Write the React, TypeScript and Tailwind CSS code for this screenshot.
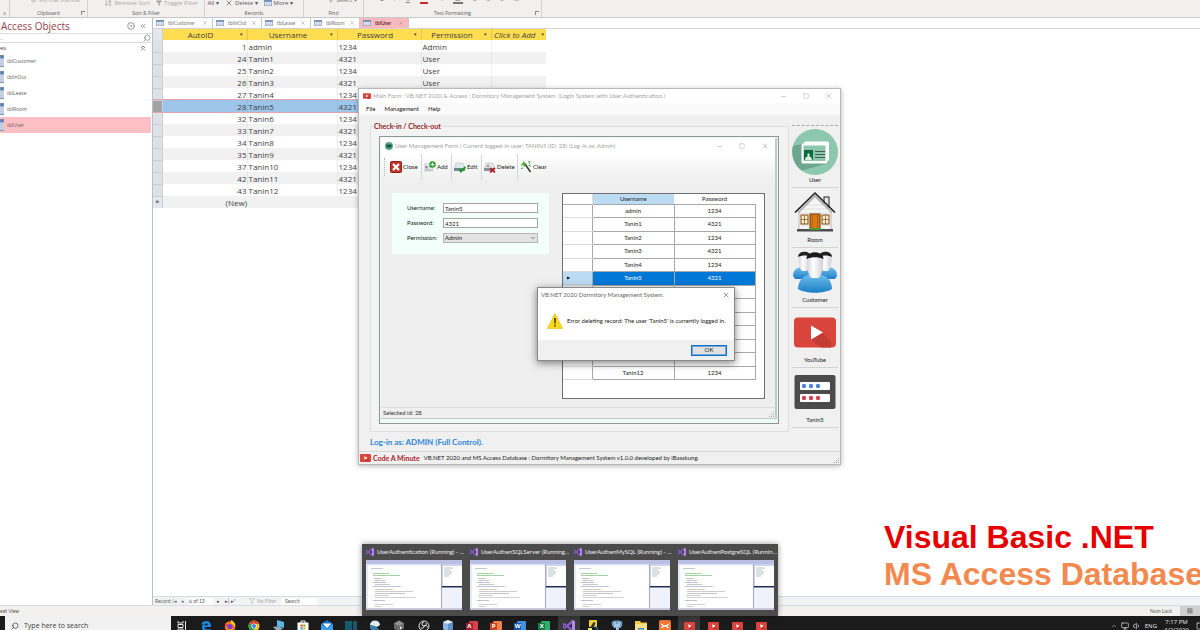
import { useState } from 'react'
import type { ReactNode } from 'react'
import {
  ArrowDownAZ,
  ChevronDown,
  ChevronsLeft,
  ChevronsUp,
  CircleDot,
  Filter,
  LayoutGrid,
  Minus,
  MousePointer2,
  Monitor,
  Paintbrush,
  Search,
  Square,
  Volume1,
  X,
} from 'lucide-react'

interface Account {
  id: number
  username: string
  password: string
  permission: string
}

const ACCOUNTS: Account[] = [
  { id: 1, username: 'admin', password: '1234', permission: 'Admin' },
  { id: 24, username: 'Tanin1', password: '4321', permission: 'User' },
  { id: 25, username: 'Tanin2', password: '1234', permission: 'User' },
  { id: 26, username: 'Tanin3', password: '4321', permission: 'User' },
  { id: 27, username: 'Tanin4', password: '1234', permission: 'User' },
  { id: 28, username: 'Tanin5', password: '4321', permission: 'Admin' },
  { id: 32, username: 'Tanin6', password: '1234', permission: 'User' },
  { id: 33, username: 'Tanin7', password: '4321', permission: 'User' },
  { id: 34, username: 'Tanin8', password: '1234', permission: 'User' },
  { id: 35, username: 'Tanin9', password: '4321', permission: 'User' },
  { id: 37, username: 'Tanin10', password: '1234', permission: 'User' },
  { id: 42, username: 'Tanin11', password: '4321', permission: 'User' },
  { id: 43, username: 'Tanin12', password: '1234', permission: 'User' },
]

const SELECTED_ID = 28

const TABLES = ['tblCustomer', 'tblInOut', 'tblLease', 'tblRoom', 'tblUser']

const PREVIEWS = [
  'UserAuthentication (Running) - ...',
  'UserAuthenSQLServer (Running...',
  'UserAuthenMySQL (Running) - ...',
  'UserAuthenPostgreSQL (Runnin...',
]

/* ---------- icons ---------- */

function TableIcon({ className }: { className: string }) {
  return (
    <svg viewBox="0 0 12 10" className={className} preserveAspectRatio="none">
      <rect x="0.5" y="0.5" width="11" height="9" fill="#fff" stroke="#7f93b5" />
      <rect x="0.5" y="0.5" width="11" height="2.5" fill="#5f7fb0" />
      <path d="M1 5h10M1 7.3h10M4.3 3v6M8 3v6" stroke="#9fb3d0" strokeWidth="0.8" />
    </svg>
  )
}

function YouTubeIcon({ className }: { className: string }) {
  return (
    <svg viewBox="0 0 42 30" className={className}>
      <rect width="42" height="30" rx="4" fill="#d9453c" />
      <path d="M28 15l9 9v6H27L17 22z" fill="#c23c34" />
      <path d="M17 8l12 7-12 7z" fill="#fff" />
    </svg>
  )
}

function VisualStudioIcon({ className }: { className: string }) {
  return (
    <svg viewBox="0 0 12 12" className={className}>
      <path d="M9 0l3 1.2v9.6L9 12 4 7.2 1.5 9 0 8.3V3.7L1.5 3 4 4.8z" fill="#8a5fc7" />
      <path d="M9 3.3v5.4L5.5 6zM1.2 4.6v2.8L2.7 6z" fill="#3b2b57" />
      <path d="M9 0l3 1.2v9.6L9 12z" fill="#b48be8" />
    </svg>
  )
}

function UserCardIcon() {
  return (
    <svg viewBox="0 0 46 46" className="size-[46px]">
      <circle cx="23" cy="23" r="23" fill="#8cc7ae" />
      <path d="M10 15L1 17a23 23 0 0 0 9 24.5L37 34z" fill="#6ea58f" />
      <rect x="12" y="12.5" width="25" height="19" rx="1.5" fill="#fff" />
      <rect x="9.5" y="14.5" width="26" height="20" rx="1.5" fill="#fff" />
      <path d="M11.5 16.5h22v15.5h-22z" fill="#8cc7ae" />
      <rect x="12" y="21" width="9" height="10" fill="#0d6b3d" />
      <path d="M13 31c0-3 2-3 2.7-3.7-1.6-4 3.2-4 1.7 0C18 28 20 28 20 31z" fill="#d8f0e3" />
      <path d="M23 22.5h10M23 25.5h10M23 28.5h10" stroke="#3f5f55" strokeWidth="1" />
    </svg>
  )
}

function HouseIcon() {
  return (
    <svg viewBox="0 0 42 42" className="size-[42px]">
      <rect x="30" y="6" width="5" height="10" fill="#e9e9e9" stroke="#222" />
      <path d="M5 20L21 4l16 16v19H5z" fill="#f6f6f6" stroke="#9a9a9a" strokeWidth="0.6" />
      <path d="M12 14h18M9 18h24M6 22h30M6 26h30M6 30h30M6 34h30" stroke="#d9d9d9" strokeWidth="0.8" />
      <path d="M1 21.5L21 2l20 19.5" fill="none" stroke="#1d1d1d" strokeWidth="1.6" />
      <path d="M4 21.5L21 5l17 16.5" fill="none" stroke="#b5b5b5" strokeWidth="2" />
      <rect x="7" y="24" width="7" height="9" fill="#f4f0cf" stroke="#8a4a14" />
      <rect x="28" y="24" width="7" height="9" fill="#f4f0cf" stroke="#8a4a14" />
      <path d="M7 28.5h7M28 28.5h7M10.5 24v9M31.5 24v9" stroke="#8a4a14" strokeWidth="0.7" />
      <rect x="16" y="23" width="10" height="15" fill="#d97a12" stroke="#6b3607" />
      <path d="M18.5 24v13M23.5 24v13" stroke="#a9560a" strokeWidth="0.7" />
      <rect x="3" y="38" width="36" height="2.5" fill="#4e4e4e" />
      <rect x="15" y="37" width="12" height="2" fill="#4c9a35" />
    </svg>
  )
}

function PeopleIcon() {
  return (
    <svg viewBox="0 0 44 42" className="h-[42px] w-[44px]">
      <defs>
        <linearGradient id="shirt" x1="0" y1="0" x2="0" y2="1">
          <stop offset="0" stopColor="#6fc0ef" />
          <stop offset="1" stopColor="#1d7fc6" />
        </linearGradient>
        <linearGradient id="face" x1="0" y1="0" x2="1" y2="0">
          <stop offset="0" stopColor="#d5d5d9" />
          <stop offset="0.4" stopColor="#fff" />
          <stop offset="1" stopColor="#cfcfd4" />
        </linearGradient>
      </defs>
      <path d="M0 25c0-6 4-9 10-9s10 3 10 9l-4 3H2z" fill="url(#shirt)" />
      <path d="M44 25c0-6-4-9-10-9s-10 3-10 9l4 3h14z" fill="url(#shirt)" />
      <path d="M5.500 5c0 8 1 13 3.500 15h5c2-2 3-7 3-15z" fill="url(#face)" />
      <path d="M27 5c0 8 1 13 3 15h5c2.500-2 3.500-7 3.500-15z" fill="url(#face)" />
      <path d="M5 6c0-7 13-7 13 0-4-2-9-2-13 0zM26 6c0-7 13-7 13 0-4-2-9-2-13 0z" fill="#222" />
      <path d="M5 38c0-10 7-15 17-15s17 5 17 15c-8 5-26 5-34 0z" fill="url(#shirt)" />
      <path d="M14 7c0 11 1 17 4.500 20h7c3.500-3 4.500-9 4.500-20z" fill="url(#face)" />
      <path d="M13.5 8c0-9 17-9 17 0-5-2.5-12-2.5-17 0z" fill="#1b1b1b" />
    </svg>
  )
}

function LoginIcon() {
  return (
    <svg viewBox="0 0 42 36" className="h-[36px] w-[42px]">
      <rect x="0.5" y="1" width="41" height="34" rx="2" fill="#4b4b4b" />
      <rect x="6" y="8" width="30" height="8" rx="1" fill="#fff" />
      <rect x="6" y="20" width="30" height="8" rx="1" fill="#fff" />
      <circle cx="10" cy="12" r="2.2" fill="#4a86d8" />
      <circle cx="17" cy="12" r="2.2" fill="#4a86d8" />
      <circle cx="24" cy="12" r="2.2" fill="#4a86d8" />
      <circle cx="10" cy="24" r="2.2" fill="#d83f4a" />
      <circle cx="17" cy="24" r="2.2" fill="#d83f4a" />
      <circle cx="24" cy="24" r="2.2" fill="#d83f4a" />
    </svg>
  )
}

const TOOL_ICON = 'size-3 shrink-0'

const TOOLS: { label: string; width: string; icon: ReactNode }[] = [
  {
    label: 'Close',
    width: 'w-[34px]',
    icon: (
      <svg viewBox="0 0 12 12" className={TOOL_ICON}>
        <rect x="0.5" y="0.5" width="11" height="11" rx="1" fill="#c43325" stroke="#8e1f15" />
        <path d="M3 3l6 6M9 3l-6 6" stroke="#fff" strokeWidth="2.2" />
      </svg>
    ),
  },
  {
    label: 'Add',
    width: 'w-[30px]',
    icon: (
      <svg viewBox="0 0 12 12" className={TOOL_ICON}>
        <rect x="0" y="3" width="9" height="7" fill="#e4e9ee" stroke="#b4bcc4" strokeWidth="0.5" />
        <path d="M1.5 5h2v2.5h-2z" fill="#9a6f86" />
        <path d="M5 6h3M1.5 9h6" stroke="#8d97a2" strokeWidth="0.7" />
        <circle cx="8.5" cy="3.5" r="3.2" fill="#27a329" />
        <path d="M8.5 1.7v3.6M6.7 3.5h3.6" stroke="#fff" strokeWidth="1.2" />
      </svg>
    ),
  },
  {
    label: 'Edit',
    width: 'w-[30px]',
    icon: (
      <svg viewBox="0 0 12 12" className={TOOL_ICON}>
        <path d="M2 2h7l2 6H0z" fill="#dfe7ee" stroke="#aab6c2" strokeWidth="0.5" />
        <rect x="0" y="7" width="11" height="3" fill="#6f8796" />
        <path d="M5 8l2 2.5L11.5 6" fill="none" stroke="#24962a" strokeWidth="2" />
      </svg>
    ),
  },
  {
    label: 'Delete',
    width: 'w-[36px]',
    icon: (
      <svg viewBox="0 0 12 12" className={TOOL_ICON}>
        <path d="M2 2h7l2 6H0z" fill="#dfe7ee" stroke="#aab6c2" strokeWidth="0.5" />
        <rect x="0" y="7" width="10" height="3" fill="#8594a0" />
        <circle cx="4" cy="5" r="1.3" fill="#c78a80" />
        <path d="M6 7l5 4.5M11 7l-5 4.5" stroke="#b3201a" strokeWidth="1.7" />
      </svg>
    ),
  },
  {
    label: 'Clear',
    width: 'w-[34px]',
    icon: (
      <svg viewBox="0 0 12 12" className={TOOL_ICON}>
        <path d="M5 3l5.5 8" stroke="#333" strokeWidth="1.5" />
        <path d="M4 0l1 2.3L7.5 3 5 4 4.5 6.5 3 4.2.5 4.5 2.3 2.5z" fill="#4eae3a" />
        <path d="M8 1l2.5-.5M8.5 4.5l2.5.5M1 7.5l2-.5M9 2.5h1" stroke="#3f9c35" />
      </svg>
    ),
  },
]

const SHORTCUTS: { label: string; icon: ReactNode }[] = [
  { label: 'User', icon: <UserCardIcon /> },
  { label: 'Room', icon: <HouseIcon /> },
  { label: 'Customer', icon: <PeopleIcon /> },
  { label: 'YouTube', icon: <YouTubeIcon className="h-[31px] w-[42px]" /> },
  { label: 'Tanin5', icon: <LoginIcon /> },
]

/* Letter tile used by the Office apps on the task bar */
function OfficeIcon({ letter, back, front }: { letter: string; back: string; front: string }) {
  return (
    <span className="relative flex h-[11px] w-3 items-center">
      <span className={`absolute inset-y-0 right-0 w-[9px] rounded-[1px] ${back}`} />
      <span
        className={`relative flex size-[7px] items-center justify-center text-[6px] leading-none font-bold text-white ${front}`}
      >
        {letter}
      </span>
    </span>
  )
}

const APP_ICON = 'size-3'

const APPS: { name: string; active?: boolean; icon: ReactNode }[] = [
  {
    name: 'Task View',
    icon: (
      <svg viewBox="0 0 12 12" className={APP_ICON}>
        <path d="M2 1v2h5V1M2 11V9h5v2M2 4.5h5v3H2zM9.5 1v10" fill="none" stroke="#e8e8e8" />
      </svg>
    ),
  },
  {
    name: 'Edge',
    icon: (
      <svg viewBox="0 0 12 12" className={APP_ICON}>
        <path
          d="M1 5.5C1.5 2.5 3.5 1 6 1c3 0 5 2 5 4.5V7H4.5c.2 2.5 3.5 3 5.8 1.7v2C6.5 12.5 2 11 2 7.5 2 5.5 3 4.2 4.5 3.7 2.8 3.7 1.7 4.5 1 5.5zM4.6 5.3h3.3C7.8 3 4.9 3 4.6 5.3z"
          fill="#1c86e0"
        />
      </svg>
    ),
  },
  {
    name: 'Firefox',
    icon: (
      <svg viewBox="0 0 12 12" className={APP_ICON}>
        <circle cx="6" cy="6.5" r="5.3" fill="#ff7b1c" />
        <path d="M7 0c3 1.5 5 4 4.3 7C10 4 8 4 7 4z" fill="#ffca2c" />
        <circle cx="6" cy="6.5" r="2.6" fill="#7a3fd0" />
        <path d="M1 3c1 1 2 1 3.5 1L3 6l-2 1z" fill="#ff3f5d" />
      </svg>
    ),
  },
  {
    name: 'Chrome',
    icon: (
      <svg viewBox="0 0 12 12" className={APP_ICON}>
        <circle cx="6" cy="6" r="5.5" fill="#f5c518" />
        <path d="M6 6L1.2 3.3A5.5 5.5 0 0 1 11 4H6z" fill="#df4232" />
        <path d="M1.2 3.3A5.5 5.5 0 0 0 5.5 11.5L8 7z" fill="#2f9e4c" />
        <circle cx="6" cy="6" r="2.6" fill="#fff" />
        <circle cx="6" cy="6" r="2" fill="#3f7fe8" />
      </svg>
    ),
  },
  {
    name: 'Remote Desktop',
    icon: (
      <svg viewBox="0 0 12 12" className={APP_ICON}>
        <path d="M4 0l7 2v6L4 6z" fill="#5ab4e6" />
        <path d="M0 7l6-1 4 3-6 2z" fill="#8fa9ba" />
      </svg>
    ),
  },
  {
    name: 'Store',
    icon: (
      <svg viewBox="0 0 12 12" className={APP_ICON}>
        <path d="M4 3V1h4v2" fill="none" stroke="#fff" />
        <rect x="0.5" y="2.5" width="11" height="9.5" fill="#fff" />
        <path d="M3.5 4.5h2.2v2.2H3.5z" fill="#e8502a" />
        <path d="M6.3 4.5h2.2v2.2H6.3z" fill="#7cb82f" />
        <path d="M3.5 7.3h2.2v2.2H3.5z" fill="#2f9fe0" />
        <path d="M6.3 7.3h2.2v2.2H6.3z" fill="#f6b81c" />
      </svg>
    ),
  },
  {
    name: 'Mail',
    icon: (
      <svg viewBox="0 0 12 12" className={APP_ICON}>
        <path d="M0 4l6-4 6 4v7H0z" fill="#1273c4" />
        <path d="M1.5 3.5h9L6 8z" fill="#fff" />
        <path d="M0 4l6 4.5L12 4v7H0z" fill="#3aa0ea" />
      </svg>
    ),
  },
  {
    name: 'Server Explorer',
    icon: (
      <svg viewBox="0 0 12 12" className={APP_ICON}>
        <path d="M0 1h7v11H0zM8 1h4v11H8z" fill="#15596b" />
      </svg>
    ),
  },
  {
    name: 'SQL Compare',
    icon: (
      <svg viewBox="0 0 12 12" className={APP_ICON}>
        <path d="M1 5a5 4.5 0 0 1 10 0L8 7z" fill="#dfe9f1" />
        <path d="M1 5l4 1 5 3a5 5 0 0 1-9-4z" fill="#3f7fae" />
      </svg>
    ),
  },
  {
    name: 'Unity',
    icon: (
      <svg viewBox="0 0 12 12" className={APP_ICON}>
        <path d="M6 .5l5 3v5l-5 3-5-3v-5z" fill="#6a6a6a" />
        <path d="M6 .5l5 3L6 6 1 3.5z" fill="#8f8f8f" />
        <path d="M7 6.5l2 1-2 2z" fill="#fff" />
      </svg>
    ),
  },
  {
    name: 'OBS',
    icon: (
      <svg viewBox="0 0 12 12" className={APP_ICON}>
        <circle cx="6" cy="6" r="5" fill="#222" stroke="#ddd" />
        <path d="M6 2a2 2 0 0 0 0 4 2 2 0 0 1-3 2M6 6a2 2 0 0 1 3.5 1.5M6 6a2 2 0 0 0 2-3" fill="none" stroke="#ddd" />
      </svg>
    ),
  },
  {
    name: 'VirtualBox',
    icon: (
      <svg viewBox="0 0 12 12" className={APP_ICON}>
        <path d="M6 0l5 2v7l-5 3-5-3V2z" fill="#8fb7e4" />
        <path d="M6 0l5 2-5 2-5-2z" fill="#e4effa" />
        <path d="M6 4l5-2v7l-5 3z" fill="#5f8dc6" />
      </svg>
    ),
  },
  { name: 'Access', icon: <OfficeIcon letter="A" back="bg-[#d6434f]" front="bg-[#a4202f]" /> },
  { name: 'PowerPoint', icon: <OfficeIcon letter="P" back="bg-[#f0814f]" front="bg-[#c8431f]" /> },
  { name: 'Word', icon: <OfficeIcon letter="W" back="bg-[#3c93e0]" front="bg-[#1b56ae]" /> },
  { name: 'Excel', icon: <OfficeIcon letter="X" back="bg-[#2fae70]" front="bg-[#147a42]" /> },
  { name: 'Visual Studio', active: true, icon: <VisualStudioIcon className={APP_ICON} /> },
  {
    name: 'SQL Tools',
    icon: (
      <svg viewBox="0 0 12 12" className={APP_ICON}>
        <rect x="2" y="0" width="8" height="7" rx="1" fill="#f3d23b" />
        <path d="M3.5 7l3-5 2 1-2 5z" fill="#333" />
        <path d="M8 7c3-1 3 4 0 4" fill="none" stroke="#3f8fd8" />
        <rect x="1" y="8" width="4" height="4" fill="#f3e27b" />
      </svg>
    ),
  },
  {
    name: 'pgAdmin',
    icon: (
      <svg viewBox="0 0 12 12" className={APP_ICON}>
        <path d="M1 1.5C3 0 9 0 11 1.5c1 2 0 5-1.5 6.5H8v4H5V8C2 9 0 4 1 1.5z" fill="#6f9dc8" />
        <path d="M4 2v5M8 2v5M6 4v6" stroke="#fff" strokeWidth="0.8" />
      </svg>
    ),
  },
  {
    name: 'File Explorer',
    icon: (
      <svg viewBox="0 0 12 12" className={APP_ICON}>
        <path d="M0 1h5l1 1.5h6V11H0z" fill="#f3c84b" />
        <path d="M0 4h12v7H0z" fill="#fbe08a" />
        <path d="M3 12V8h6v4H8V9.5H4V12z" fill="#3f8fd8" />
      </svg>
    ),
  },
  {
    name: 'XAMPP',
    icon: (
      <svg viewBox="0 0 12 12" className={APP_ICON}>
        <rect width="12" height="12" rx="2" fill="#f0793a" />
        <path d="M2.5 4l2 2-2 2M4.5 6h3M9.5 4l-2 2 2 2" fill="none" stroke="#fff" strokeWidth="1.3" />
      </svg>
    ),
  },
  { name: 'YouTube', active: true, icon: <YouTubeIcon className="h-2 w-[11px]" /> },
  { name: 'YouTube 2', icon: <YouTubeIcon className="h-2 w-[11px]" /> },
  { name: 'YouTube 3', icon: <YouTubeIcon className="h-2 w-[11px]" /> },
  { name: 'YouTube 4', icon: <YouTubeIcon className="h-2 w-[11px]" /> },
]

/* ---------- Access shell ---------- */

function RibbonGroup({ label, width, launcher, children }: { label: string; width: string; launcher?: boolean; children?: ReactNode }) {
  return (
    <div className={`relative flex h-full shrink-0 flex-col justify-end border-r border-[#d5d3d2] ${width}`}>
      <div className="flex items-center justify-end gap-1.5 pr-1.5 pb-[3px] text-[6px] leading-[8px] whitespace-nowrap text-[#aaa8a7]">
        {children}
      </div>
      <div className="text-center text-[5px] leading-[7px] text-[#555]">{label}</div>
      {launcher && <span className="absolute right-0.5 bottom-0.5 size-1 border-t border-l border-[#888]" />}
    </div>
  )
}

function Ribbon() {
  return (
    <header className="flex h-[18px] shrink-0 overflow-hidden border-b border-[#c9c7c6] bg-[#f2f0ef] font-['Open_Sans','Noto_Sans',sans-serif]">
      <RibbonGroup label="s" width="w-[10px]" />
      <RibbonGroup label="Clipboard" width="w-[78px]" launcher>
        <span className="flex items-center gap-0.5 pb-[3px]">
          <Paintbrush className="size-1.5" />
          Format Painter
        </span>
      </RibbonGroup>
      <RibbonGroup label="Sort & Filter" width="w-[117px]">
        <span className="flex items-center gap-0.5">
          <ArrowDownAZ className="size-2" />
          Remove Sort
        </span>
        <span className="flex items-center gap-0.5">
          <Filter className="size-1.5 fill-current" />
          Toggle Filter
        </span>
      </RibbonGroup>
      <RibbonGroup label="Records" width="w-[99px]">
        <span className="text-[#555]">All ▾</span>
        <span className="flex items-center gap-0.5 text-[#555]">
          <X className="size-2" />
          Delete ▾
        </span>
        <span className="flex items-center gap-0.5 pr-1 text-[#555]">
          <TableIcon className="h-1.5 w-2" />
          More ▾
        </span>
      </RibbonGroup>
      <RibbonGroup label="Find" width="w-[60px]">
        <span className="flex items-center gap-0.5 pb-[3px] text-[#777]">
          <MousePointer2 className="size-1.5" />
          Select ▾
        </span>
      </RibbonGroup>
      <RibbonGroup label="Text Formatting" width="w-[178px]" launcher>
        <span className="flex w-full items-center justify-between px-4 pb-[3px] text-[#888]">
          <b>B</b>
          <i>I</i>
          <u>U</u>
          <b className="border-b-2 border-[#d0262c] px-0.5">A</b>
          <span>✎</span>
          <b className="border-b-2 border-[#777] px-0.5">◧</b>
          <span>≡</span>
          <span>≡</span>
          <span>≡</span>
          <span>⊞</span>
        </span>
      </RibbonGroup>
    </header>
  )
}

function ObjectsPane() {
  return (
    <aside className="flex w-[151px] shrink-0 flex-col font-['Open_Sans','Noto_Sans',sans-serif]">
      <div className="flex h-[15px] items-center gap-1 pr-1 pl-px text-[#6b6b6b]">
        <h2 className="flex-1 text-[10px] leading-[14px] text-[#9b3c48]">Access Objects</h2>
        <CircleDot className="size-2" />
        <ChevronsLeft className="size-2" />
      </div>
      <label className="flex h-[10px] items-center border-y border-[#dcdcdc]">
        <span className="sr-only">Filter objects</span>
        <input className="h-2 w-0 flex-1 text-[6px] leading-[8px] text-[#777]" defaultValue=".." />
        <Search className="size-2 -scale-x-100 text-[#777]" />
      </label>
      <div className="flex h-[10px] items-center justify-between pr-1 text-[6px] leading-[7px] text-[#444]">
        es
        <ChevronsUp className="size-2" />
      </div>
      <ul>
        {TABLES.map((name) => (
          <li key={name}>
            <button
              className={`flex h-4 w-full items-center gap-[3px] text-[5px] leading-[8px] text-[#5a5a5a] ${name === 'tblUser' ? 'bg-[#fdbfc3]' : ''}`}
            >
              <TableIcon className="h-3 w-1" />
              {name}
            </button>
          </li>
        ))}
      </ul>
    </aside>
  )
}

function DocumentTabs() {
  return (
    <nav className="flex h-[11px] shrink-0 border-b border-[#d2d2d2]">
      {TABLES.map((name, i) => (
        <button
          key={name}
          className={`flex items-center gap-1 border-r border-[#c8c8c8] pr-1 pl-[3px] text-[5px] leading-[8px] ${i === 0 ? 'w-[60px]' : 'w-[49px]'} ${
            name === 'tblUser' ? 'bg-[#f9b9be] font-bold text-[#6b3239]' : 'text-[#7a7a7a]'
          }`}
        >
          <TableIcon className="h-1.5 w-2 shrink-0" />
          <span className="flex-1 text-left">{name}</span>
          <X className="size-1.5 text-[#999]" />
        </button>
      ))}
    </nav>
  )
}

const HEAD_CELL = 'relative border-r border-[#e3c64a] p-0 pr-2 font-normal'

function Datasheet() {
  return (
    <table className="w-[393px] table-fixed border-collapse font-['Open_Sans','Noto_Sans',sans-serif] text-[8px] leading-[11px] text-[#3f3f3f]">
      <colgroup>
        <col className="w-[9px]" />
        <col className="w-[85px]" />
        <col className="w-[90px]" />
        <col className="w-[84px]" />
        <col className="w-[70px]" />
        <col className="w-[55px]" />
      </colgroup>
      <thead>
        <tr className="h-[11px] bg-[#fede50]">
          <th className="border-r border-[#c9ced8] bg-[#e4e7ee] p-0" />
          {['AutoID', 'Username', 'Password', 'Permission'].map((name) => (
            <th key={name} className={HEAD_CELL}>
              {name}
              <span className="absolute top-0 right-1 text-[5px]">▾</span>
            </th>
          ))}
          <th className="relative p-0 pr-2 font-normal whitespace-nowrap italic">
            Click to Add
            <span className="absolute top-0 right-0.5 text-[5px]">▾</span>
          </th>
        </tr>
      </thead>
      <tbody>
        {ACCOUNTS.map((row) => {
          const selected = row.id === SELECTED_ID
          return (
            <tr
              key={row.id}
              className={selected ? 'h-3 bg-[#9cc5e9] outline outline-[#e5a3ac]' : 'h-3 even:bg-[#f1f1f1]'}
            >
              <td className={`border-r border-b border-[#c9ced8] p-0 ${selected ? 'bg-[#a3a3a3]' : 'bg-[#dde1e8]'}`} />
              <td className="border-r border-black/5 p-0 text-right">{row.id}</td>
              <td className="border-r border-black/5 p-0 pl-px">{row.username}</td>
              <td className="border-r border-black/5 p-0 pl-px">{row.password}</td>
              <td className="border-r border-black/5 p-0 pl-px">{row.permission}</td>
              <td className="p-0" />
            </tr>
          )
        })}
        <tr className="h-3 bg-[#f1f1f1]">
          <td className="border-r border-[#c9ced8] bg-[#e4e7ee] p-0 text-center leading-[8px]">*</td>
          <td className="p-0 text-right">(New)</td>
          <td colSpan={4} className="p-0" />
        </tr>
      </tbody>
    </table>
  )
}

function RecordBar() {
  return (
    <div className="flex h-[9px] shrink-0 items-center gap-1 border-t border-[#d8dbe0] bg-[#f1f3f6] pl-0.5 text-[5px] leading-[7px] whitespace-nowrap text-[#666]">
      <span className="w-[22px]">Record: |◂</span>
      <span className="w-1">◂</span>
      <span className="w-6 bg-white text-[#555]">6 of 13</span>
      <span className="w-1 text-[#444]">▸</span>
      <span className="w-5 text-[#444]">▸| ▸*</span>
      <span className="flex w-7 items-center gap-0.5 text-[#aaa]">
        <Filter className="size-1.5" />
        No Filter
      </span>
      <input aria-label="Search records" className="w-9 bg-white px-1 text-[#555] placeholder:text-[#555]" placeholder="Search" />
    </div>
  )
}

/* ---------- dormitory forms ---------- */

function CaptionButtons() {
  return (
    <div className="flex items-center gap-4 text-[#b0b0b0]">
      <button aria-label="Minimize"><Minus className="size-[7px]" /></button>
      <button aria-label="Maximize"><Square className="size-1.5" /></button>
      <button aria-label="Close"><X className="size-2" /></button>
    </div>
  )
}

function UserGrid() {
  return (
    <div className="h-[206px] w-[203px] border border-[#6e6e6e] bg-white">
      <table className="w-[192px] table-fixed border-collapse text-center text-[6px] leading-[8px] text-[#222]">
        <colgroup>
          <col className="w-[29px]" />
          <col className="w-[82px]" />
          <col className="w-[81px]" />
        </colgroup>
        <thead>
          <tr className="h-[10px] border-b border-[#a8a8a8]">
            <th className="border-r border-[#dcdcdc] p-0" />
            <th className="bg-[#bcdcf4] p-0 font-normal">Username</th>
            <th className="p-0 font-normal">Password</th>
          </tr>
        </thead>
        <tbody>
          {ACCOUNTS.map((row) => {
            const selected = row.id === SELECTED_ID
            return (
              <tr key={row.id} className={`odd:h-[13px] even:h-[14px] ${selected ? 'bg-[#0078d7] text-white' : ''}`}>
                <td className={`border-b border-[#dcdcdc] p-0 pl-1 text-left text-[4px] text-black ${selected ? 'bg-[#bcdcf4]' : ''}`}>
                  {selected ? '▶' : ''}
                </td>
                <td className="border border-[#a8a8a8] p-0">{row.username}</td>
                <td className="border border-[#a8a8a8] p-0">{row.password}</td>
              </tr>
            )
          })}
        </tbody>
      </table>
    </div>
  )
}

const FIELD = 'h-[10px] w-[95px] border border-[#a5a5a5] bg-white px-px text-[6px] leading-[8px] text-[#222]'

function UserForm() {
  const [username, setUsername] = useState('Tanin5')
  const [password, setPassword] = useState('4321')
  const [permission, setPermission] = useState('Admin')

  return (
    <form className="flex h-[61px] w-[157px] flex-col gap-[5px] bg-[#f2fffa] pt-[10px] pl-[15px] text-[6px] leading-[8px] text-[#222]">
      <div className="flex items-center">
        <label htmlFor="username" className="w-9">Username:</label>
        <input id="username" className={FIELD} value={username} onChange={(e) => setUsername(e.target.value)} />
      </div>
      <div className="flex items-center">
        <label htmlFor="password" className="w-9">Password:</label>
        <input id="password" className={FIELD} value={password} onChange={(e) => setPassword(e.target.value)} />
      </div>
      <div className="flex items-center">
        <label htmlFor="permission" className="w-9">Permission:</label>
        <div className="relative flex">
          <select
            id="permission"
            className="h-[10px] w-[95px] appearance-none border border-[#b5b5b5] bg-[#e3e3e3] px-px text-[6px] leading-[8px]"
            value={permission}
            onChange={(e) => setPermission(e.target.value)}
          >
            <option>Admin</option>
            <option>User</option>
          </select>
          <ChevronDown className="pointer-events-none absolute top-0.5 right-0.5 size-1.5" />
        </div>
      </div>
    </form>
  )
}

function UserManagementForm() {
  return (
    <section className="border border-[#8d9792] bg-[#effaf6] px-px pt-px pb-1">
      <div className="flex flex-col border-r-2 border-b border-[#c3c9c7] bg-[#efefef] text-[6px] leading-[8px]">
        <div className="flex h-4 items-center gap-0.5 bg-white pr-1.5 pl-1 text-[#a3a3a3]">
          <svg viewBox="0 0 8 8" className="size-2">
            <circle cx="4" cy="4" r="4" fill="#5fa58a" />
            <rect x="1.5" y="2.5" width="5" height="3" fill="#0d5b3d" />
          </svg>
          <h3 className="flex-1 whitespace-nowrap">
            User Management Form | Current logged-in user: TANIN5 (ID: 28) (Log-in as: Admin)
          </h3>
          <CaptionButtons />
        </div>

        {/* Toolbar */}
        <div className="flex h-[26px] bg-linear-to-b from-white to-[#efefef] pl-[3px]">
          <span className="my-1 w-1 border-l border-dotted border-[#b5b5b5]" />
          {TOOLS.map((tool) => (
            <button
              key={tool.label}
              className={`flex items-center gap-px border-r border-[#d6d6d6] pl-0.5 text-[#222] last:border-0 ${tool.width}`}
            >
              {tool.icon}
              {tool.label}
            </button>
          ))}
        </div>

        <div className="flex items-start justify-between pt-[13px] pr-[10px] pb-2 pl-[11px]">
          <UserForm />
          <UserGrid />
        </div>

        <div className="flex h-[11px] items-center justify-between border-t border-[#dedede] pl-0.5 text-[#333]">
          Selected id: 28
          <SizeGrip />
        </div>
      </div>
    </section>
  )
}

function SizeGrip() {
  return (
    <svg viewBox="0 0 6 6" className="size-1.5 self-end">
      <path d="M4 0h1v1H4zM2 2h1v1H2zM4 2h1v1H4zM0 4h1v1H0zM2 4h1v1H2zM4 4h1v1H4z" fill="#a8a8a8" />
    </svg>
  )
}

function MainForm() {
  return (
    <section className="absolute top-[88px] left-[358px] flex w-[483px] flex-col border border-[#b9b9b9] bg-[#f0f0f0] text-[6px] leading-[8px] shadow-[0_1px_5px_rgba(0,0,0,0.3)]">
      <div className="flex h-[14px] items-center gap-0.5 bg-white pr-[7px] pl-1 text-[#a3a3a3]">
        <YouTubeIcon className="h-1.5 w-2" />
        <h1 className="flex-1 whitespace-nowrap">
          Main Form : VB.NET 2020 &amp; Access : Dormitory Management System. (Login System with User Authentication.)
        </h1>
        <CaptionButtons />
      </div>
      <nav className="flex h-3 items-center gap-[9px] bg-[#fafafa] pl-[7px] text-[#222]">
        <button>File</button>
        <button>Management</button>
        <button>Help</button>
      </nav>

      <div className="flex">
        <div className="flex-1 pt-[7px] pl-[11px]">
          <fieldset className="border border-[#dfdfdf] bg-[#f3f3f3]">
            <legend className="ml-0.5 px-px text-[7px] font-bold text-[#8f1d24]">Check-in / Check-out</legend>
            <div className="pt-[6px] pr-[9px] pb-[7px] pl-2">
              <UserManagementForm />
            </div>
          </fieldset>
          <p className="pt-[6px] pb-[5px] text-[8px] font-bold text-[#2d86d9]">Log-in as: ADMIN (Full Control).</p>
        </div>

        {/* Shortcut strip */}
        <div className="w-[51px] shrink-0 pt-[10px] pr-0.5 pl-[3px]">
          <div className="mb-0.5 border-t border-dashed border-[#aaa]" />
          {SHORTCUTS.map(({ label, icon }) => (
            <button
              key={label}
              className="flex h-[60px] w-full flex-col items-center border-b border-[#d3d3d3] pb-[3px] text-[#222]"
            >
              <span className="flex flex-1 items-center">{icon}</span>
              {label}
            </button>
          ))}
        </div>
      </div>

      <footer className="flex h-[13px] items-center gap-0.5 border-t border-[#d7d7d7] pl-px text-[#222]">
        <YouTubeIcon className="h-2 w-[11px]" />
        <b className="text-[7px] text-[#a8242b]">Code A Minute</b>
        <span className="flex-1 pl-0.5 whitespace-nowrap">
          VB.NET 2020 and MS Access Database : Dormitory Management System v1.0.0 developed by iBasskung.
        </span>
        <SizeGrip />
      </footer>
    </section>
  )
}

function ErrorDialog() {
  return (
    <div
      role="alertdialog"
      aria-label="VB.NET 2020 Dormitory Management System."
      className="absolute top-[287px] left-[537px] flex w-[198px] flex-col border border-[#8a8a8a] bg-white text-[6px] leading-[8px] text-[#222] shadow-[0_2px_8px_rgba(0,0,0,0.5)]"
    >
      <div className="flex h-[14px] items-center justify-between pr-1 pl-[3px] text-[#666]">
        <span>VB.NET 2020 Dormitory Management System.</span>
        <button aria-label="Close"><X className="size-2" /></button>
      </div>
      <div className="flex h-[38px] items-center gap-1 pl-[9px]">
        <svg viewBox="0 0 16 16" className="size-4 shrink-0">
          <path d="M8 .5L15.7 15.5H.3z" fill="#fbd81a" stroke="#e3b90b" strokeWidth="0.6" />
          <path d="M7.2 5h1.6l-.3 6h-1zM7.3 12h1.4v1.5H7.3z" fill="#222" />
        </svg>
        <p className="whitespace-nowrap">Error deleting record: The user 'Tanin5' is currently logged in.</p>
      </div>
      <div className="flex h-5 items-center justify-end bg-[#f0f0f0] pr-[7px]">
        <button className="h-[11px] w-9 border border-[#0a6fcb] bg-[#e1e1e1] ring-1 ring-[#0a6fcb]/50 ring-inset">OK</button>
      </div>
    </div>
  )
}

/* ---------- task bar ---------- */

/* Code lines of a preview: x, y, width, colour */
const CODE: [number, number, number, string][] = [
  [5, 8, 12, '#b5c0cc'],
  [7, 13, 16, '#8cc78c'],
  [7, 15, 27, '#8cc78c'],
  [8, 18, 8, '#a9b6d0'],
  [9, 20, 10, '#bbb'],
  [7, 22, 13, '#a9b6d0'],
  [9, 24, 15, '#bbb'],
  [7, 26, 28, '#a9b6d0'],
  [9, 29, 18, '#d3b7b0'],
  [9, 31, 38, '#c0c0c0'],
  [9, 33, 30, '#c0b3b3'],
  [9, 35, 14, '#c0c0c0'],
  [9, 37, 40, '#c3c3cc'],
  [7, 40, 12, '#a9b6d0'],
  [9, 44, 18, '#c6c6c6'],
  [9, 46, 6, '#c6c6c6'],
]

function PreviewStrip() {
  return (
    <div className="absolute bottom-[14px] left-[362px] flex gap-2 bg-[#4b4b4b] px-1 pb-1.5 shadow-[0_0_6px_rgba(0,0,0,0.4)]">
      {PREVIEWS.map((title) => (
        <button key={title} className="w-24">
          <span className="flex h-4 items-center gap-[3px] text-[6px] leading-[8px] whitespace-nowrap text-[#ececec]">
            <VisualStudioIcon className="size-2 shrink-0" />
            {title}
          </span>
          <svg viewBox="0 0 96 50" className="block h-[50px] w-24">
            <rect width="96" height="50" fill="#fff" />
            <rect width="96" height="4" fill="#b9bfe0" />
            <rect y="4" width="76" height="1.5" fill="#e3e6f4" />
            <rect y="5" width="2" height="45" fill="#e6e8f5" />
            <rect x="75" y="4" width="1.5" height="46" fill="#9fa7cf" />
            <rect x="76" y="4" width="20" height="2" fill="#cdd3ec" />
            <path d="M78 8h9M78 10h6M78 12h8M78 14h7M78 16h5" stroke="#9aa" strokeWidth="0.7" />
            <rect x="76" y="26" width="20" height="1.5" fill="#1e2a55" />
            <rect x="76" y="28" width="20" height="20" fill="#f0f2fb" />
            <rect y="48" width="96" height="2" fill="#cfc3dc" />
            {CODE.map(([x, y, width, fill]) => (
              <rect key={y} x={x} y={y} width={width} height="0.8" fill={fill} />
            ))}
          </svg>
        </button>
      ))}
    </div>
  )
}

function TaskBar() {
  return (
    <footer className="h-[14px] shrink-0 overflow-hidden bg-[#1b1b1b] font-['Open_Sans','Noto_Sans',sans-serif]">
      <div className="flex h-5 items-center">
        <label className="ml-[5px] flex h-full w-[166px] items-center gap-[5px] bg-[#f1f1f1] pl-[6px]">
          <Search className="size-2 -scale-x-100 text-[#333]" />
          <input
            className="w-0 flex-1 text-[7px] leading-[10px] placeholder:text-[#444]"
            aria-label="Search"
            placeholder="Type here to search"
          />
        </label>
        <div className="flex w-[602px] items-center justify-between">
          {APPS.map((app) => (
            <button
              key={app.name}
              aria-label={app.name}
              className={`flex h-5 w-[22px] items-center justify-center ${app.active ? 'bg-[#3a3a3a]' : ''}`}
            >
              {app.icon}
            </button>
          ))}
        </div>
        <div className="ml-auto flex h-full items-center gap-1 text-[6px] text-[#e6e6e6]">
          <ChevronDown className="size-1.5 rotate-180" />
          <Monitor className="size-2" />
          <Volume1 className="size-2" />
          <span>ENG</span>
          <div className="w-[31px] text-center text-[6px] leading-[8px] whitespace-nowrap">
            7:17 PM
            <br />
            4/2/2020
          </div>
          <span className="w-1 overflow-hidden">
            <Square className="size-2" />
          </span>
        </div>
      </div>
    </footer>
  )
}

export default function App() {
  return (
    <div className="relative flex h-screen flex-col overflow-hidden bg-white font-['Lato','Open_Sans',sans-serif]">
      <Ribbon />
      <div className="flex min-h-0 flex-1">
        <ObjectsPane />
        <main className="ml-px flex min-w-0 flex-1 flex-col border-l border-[#b9c0cc]">
          <DocumentTabs />
          <div className="min-h-0 flex-1 overflow-hidden">
            <Datasheet />
          </div>
          <RecordBar />
        </main>
      </div>
      <div className="flex h-[11px] shrink-0 items-center justify-between border-t border-[#dcdcdc] bg-[#f2f1f0] text-[5px] leading-[8px] text-[#555]">
        <span>eet View</span>
        <span className="flex h-full items-center gap-2">
          Num Lock
          <span className="flex h-full w-5 items-center justify-center bg-[#d0d0d0]">
            <LayoutGrid className="size-1.5" />
          </span>
        </span>
      </div>
      <TaskBar />

      <MainForm />
      <ErrorDialog />
      <PreviewStrip />

      <div className="absolute top-[519px] left-[884px] font-['Liberation_Sans',Arial,sans-serif] text-[32px] leading-[37px] font-bold whitespace-nowrap">
        <p className="text-[#e60000]">Visual Basic .NET</p>
        <p className="text-[#f28a50]">MS Access Database</p>
      </div>
    </div>
  )
}
